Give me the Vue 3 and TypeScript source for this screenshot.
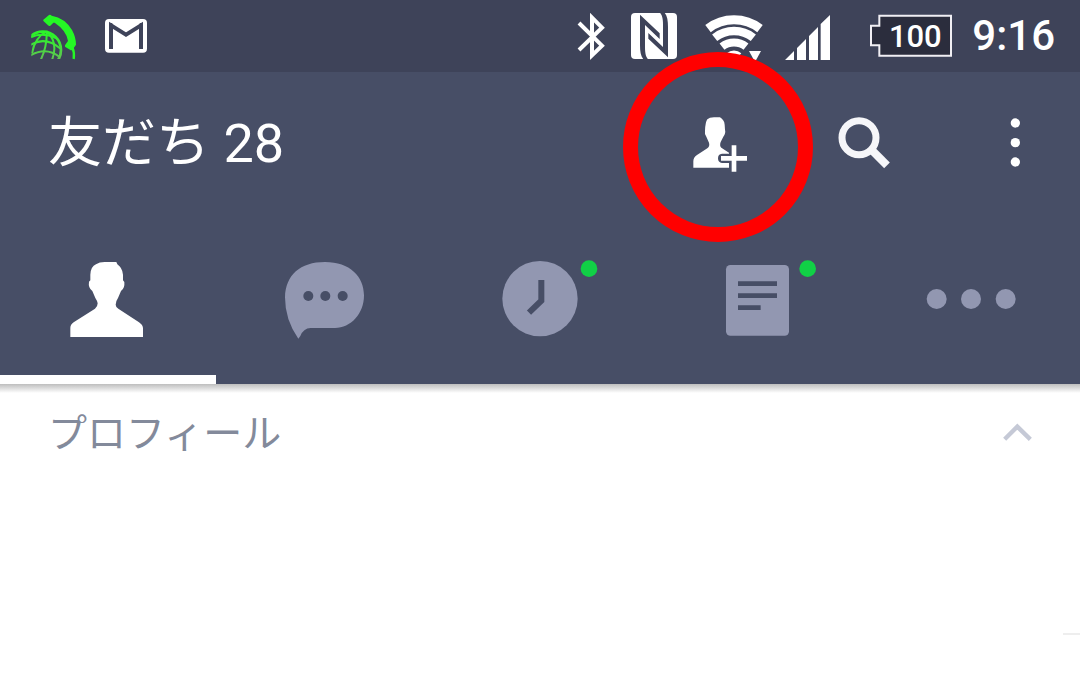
<script setup lang="ts">
import { ref } from 'vue'

type TabId = 'friends' | 'chats' | 'timeline' | 'news' | 'more'

interface Tab {
  id: TabId
  label: string
  viewBox: string
}

const tabs: Tab[] = [
  { id: 'friends', label: '友だち', viewBox: '24 0 360 360' },
  { id: 'chats', label: 'トーク', viewBox: '672 0 360 360' },
  { id: 'timeline', label: 'タイムライン', viewBox: '0 0 360 360' },
  { id: 'news', label: 'ニュース', viewBox: '648 0 360 360' },
  { id: 'more', label: 'その他', viewBox: '36 -60 360 360' },
]

const active = ref<TabId>('friends')
const friendCount = ref(28)
const expanded = ref(true)
</script>

<template>
  <div class="screen">
    <header class="header">
      <div class="status">
        <svg class="st-phone" viewBox="84 0 156 216" aria-hidden="true">
          <defs>
            <linearGradient id="call" gradientUnits="userSpaceOnUse" x1="0" y1="45" x2="0" y2="177">
              <stop offset="0" stop-color="#1fff1f" />
              <stop offset="0.5" stop-color="#30f02c" />
              <stop offset="1" stop-color="#5fc452" />
            </linearGradient>
            <clipPath id="globe"><rect x="94" y="80" width="100" height="97" /></clipPath>
          </defs>
          <path
            fill="#25f825"
            d="M130 59 L147 45 Q151 43 155 47 Q195 54 216 90 Q228 112 228 134 L217 150 Q214 152 210 149 L196 141 Q193 138 196 134 L204 123 Q200 92 164 68 L160 68 L151 77 Q147 79 144 76 L131 64 Q129 62 130 59 Z"
          />
          <path fill="none" stroke="#25f825" stroke-width="7" d="M217 142 Q224 158 221 177" />
          <g clip-path="url(#globe)" fill="none" stroke="url(#call)" stroke-width="6">
            <circle cx="128" cy="150" r="55" stroke-width="8" />
            <path d="M92 112 Q128 96 168 114" />
            <path d="M84 140 Q132 104 182 146" />
            <path d="M88 168 Q138 138 180 172" />
            <path d="M140 94 Q104 112 96 160" />
            <path d="M140 94 Q142 138 122 180" />
            <path d="M140 94 Q176 128 156 180" />
          </g>
        </svg>
        <svg class="st-mail" viewBox="300 0 156 216" aria-hidden="true">
          <rect x="315" y="57" width="126" height="101" rx="12" fill="#fff" />
          <path d="M333 147 V76 L378 104 L423 76 V147" fill="none" stroke="#3e4359" stroke-width="12" />
          <path d="M327 69 H336 L345 84 H327 Z M429 69 H420 L411 84 H429 Z" fill="#3e4359" />
        </svg>
        <div class="status-right">
          <svg class="st-bt" viewBox="36 0 108 216" aria-hidden="true">
            <path d="M57 69 L126 137 L96 166 V53 L126 83 L57 150" fill="none" stroke="#fff" stroke-width="12" />
          </svg>
          <svg class="st-nfc" viewBox="0 -30 156 216" aria-hidden="true">
            <rect x="9" y="9" width="138" height="138" rx="12" fill="#fff" />
            <g fill="#3e4359">
              <path d="M36 14 L95 70 V87 L51 45 V112 C51 132 54 141 60 148 H46 C38 138 36 124 36 105 Z" />
              <path d="M120 142 L61 86 V69 L105 111 V44 C105 24 102 15 96 8 H110 C118 18 120 32 120 51 Z" />
            </g>
          </svg>
          <svg class="st-wifi" viewBox="420 0 204 216" aria-hidden="true">
            <g fill="none" stroke="#fff">
              <path stroke-width="27" d="M444 86 A128 128 0 0 1 600 86" />
              <path stroke-width="25" d="M464 113 A94 94 0 0 1 580 113" />
              <path stroke-width="24" d="M486 140 A59 59 0 0 1 558 140" />
              <path stroke-width="22" d="M507 168 A24 24 0 0 1 537 168" />
            </g>
            <path d="M567 153 H603 L585 186 Z" fill="#fff" />
          </svg>
          <svg class="st-signal" viewBox="672 0 144 216" aria-hidden="true">
            <path
              fill="#fff"
              d="M675 180 L702 153 V180 Z M711 144 L738 117 V180 H711 Z M747 108 L774 81 V180 H747 Z M782 72 L810 45 V180 H782 Z"
            />
          </svg>
          <div class="battery">
            <svg viewBox="84 0 252 216" aria-hidden="true">
              <path
                d="M93 77 H118 V47 H333 V167 H118 V136 H93 Z"
                fill="#2b2d3d"
                stroke="#f1eff4"
                stroke-width="6"
              />
            </svg>
            <span>100</span>
          </div>
          <time class="clock">9:16</time>
        </div>
      </div>

      <div class="bar">
        <h1>友だち {{ friendCount }}</h1>
        <button type="button" class="action highlight" aria-label="友だち追加">
          <svg viewBox="114 96 432 432" aria-hidden="true">
            <path
              fill="#fff"
              d="M250 383 V364 Q250 352 261 345 L292 325 Q300 319 297 308 L289 290 Q283 283 285 272 Q286 246 292 238 Q298 232 312 232 H330 Q343 240 344 254 L345 269 Q348 280 340 290 L332 306 Q328 318 334 323 L357 338 V341 H336 Q324 342 324 355 Q324 368 336 369 H357 V383 Z"
            />
            <path d="M333 355 H411 M372 316 V395" fill="none" stroke="#fff" stroke-width="14" />
          </svg>
        </button>
        <button type="button" class="action" aria-label="検索">
          <svg viewBox="-84 -84 432 432" aria-hidden="true">
            <g fill="none" stroke="#f6f6f9">
              <circle cx="117" cy="113" r="51" stroke-width="21" />
              <path d="M154 149 L201 196" stroke-width="24" />
            </g>
          </svg>
        </button>
        <button type="button" class="action" aria-label="メニュー">
          <svg viewBox="348 -84 432 432" aria-hidden="true">
            <g fill="#fff">
              <circle cx="586" cy="69" r="14" />
              <circle cx="586" cy="128" r="14" />
              <circle cx="586" cy="186" r="14" />
            </g>
          </svg>
        </button>
      </div>

      <nav class="tabs">
        <button
          v-for="tab in tabs"
          :key="tab.id"
          type="button"
          class="tab"
          :class="{ active: tab.id === active }"
          :aria-label="tab.label"
          @click="active = tab.id"
        >
          <svg :viewBox="tab.viewBox" aria-hidden="true">
            <path
              v-if="tab.id === 'friends'"
              fill="currentColor"
              d="M91 291 V264 Q91 254 101 247 L165 206 Q173 200 173 190 Q172 183 166 174 L157 153 Q144 143 147 125 L151 121 V104 Q152 80 168 73 Q178 66 194 66 H229 L232 73 Q247 83 249 104 V121 L253 126 Q255 145 243 153 L234 174 Q227 184 227 194 Q227 201 235 206 L297 247 Q309 255 309 265 V291 Z"
            />
            <template v-else-if="tab.id === 'chats'">
              <path
                fill="currentColor"
                d="M775 296 Q735 240 735 172 C737 105 780 66 855 66 C930 66 972 110 972 166 C972 222 932 264 885 264 H812 Q790 265 781 288 Z"
              />
              <g class="cut">
                <circle cx="805" cy="168" r="15" />
                <circle cx="856" cy="168" r="15" />
                <circle cx="908" cy="168" r="15" />
              </g>
            </template>
            <template v-else-if="tab.id === 'timeline'">
              <circle cx="180" cy="176" r="113" fill="currentColor" />
              <path class="cut-line" d="M184 120 V182 L147 218" stroke-width="18" />
              <circle class="badge" cx="327" cy="86" r="25" />
            </template>
            <template v-else-if="tab.id === 'news'">
              <rect x="738" y="75" width="189" height="212" rx="13" fill="currentColor" />
              <path class="cut-line" d="M774 131 H891 M774 167 H891 M774 203 H842" stroke-width="14" />
              <circle class="badge" cx="983" cy="86" r="25" />
            </template>
            <g v-else fill="currentColor">
              <circle cx="110" cy="117" r="30" />
              <circle cx="213" cy="117" r="30" />
              <circle cx="317" cy="117" r="30" />
            </g>
          </svg>
        </button>
      </nav>
    </header>

    <main>
      <section class="profile">
        <div class="section-head">
          <h2>プロフィール</h2>
          <button type="button" aria-label="折りたたむ" :aria-expanded="expanded" @click="expanded = !expanded">
            <svg viewBox="282 450 144 144" aria-hidden="true">
              <path d="M314 538 L352 500 L391 538" fill="none" stroke="#c5c9d6" stroke-width="13" />
            </svg>
          </button>
        </div>
        <div v-if="expanded" class="profile-body"></div>
        <hr />
      </section>
    </main>
  </div>
</template>

<style>
body {
  margin: 0;
  background: #fff;
}
</style>

<style scoped>
.screen {
  min-height: 100vh;
  background: #fff;
  font-family: Roboto, 'Noto Sans CJK JP', sans-serif;
}

svg {
  display: block;
}

button {
  margin: 0;
  padding: 0;
  border: 0;
  background: none;
  cursor: pointer;
}

h1,
h2 {
  margin: 0;
  font-weight: 400;
}

.header {
  position: relative;
  background: #474e66;
  color: #fff;
}

.header::after {
  content: '';
  position: absolute;
  top: 100%;
  left: 0;
  right: 0;
  height: 9px;
  background: linear-gradient(#bebebe, #fff);
}

.status {
  display: flex;
  align-items: center;
  height: 72px;
  padding: 0 25px 0 28px;
  gap: 20px;
  background: #3e4359;
}

.status svg {
  height: 72px;
  flex: none;
}

.st-phone,
.st-mail,
.st-nfc {
  width: 52px;
}

.st-bt {
  width: 36px;
}

.st-wifi {
  width: 68px;
}

.st-signal {
  width: 48px;
}

.status-right {
  display: flex;
  align-items: center;
  gap: 20px;
  margin-left: auto;
}

.st-signal {
  margin-left: -4px;
}

.battery {
  position: relative;
  display: flex;
  align-items: center;
  justify-content: center;
  width: 84px;
  height: 72px;
  margin-left: 16px;
  font-size: 31px;
  font-weight: 500;
}

.battery svg {
  position: absolute;
  inset: 0;
  width: 84px;
}

.battery span {
  position: relative;
  padding-left: 10px;
}

.clock {
  font-size: 42px;
  font-weight: 500;
  line-height: 52px;
}

.bar {
  display: flex;
  align-items: center;
  height: 144px;
  padding-left: 48px;
}

.bar h1 {
  flex: 1;
  font-size: 54px;
  line-height: 72px;
  white-space: nowrap;
}

.action {
  position: relative;
  width: 144px;
  height: 144px;
}

.highlight::after {
  content: '';
  position: absolute;
  top: -20px;
  left: -25px;
  width: 160px;
  height: 160px;
  border: 15px solid #f00;
  border-radius: 50%;
}

.tabs {
  display: flex;
}

.tab {
  display: flex;
  flex: 1;
  justify-content: center;
  height: 168px;
  padding-top: 24px;
  color: #9297b1;
}

.tab svg {
  width: 120px;
  height: 120px;
}

.tab.active {
  color: #fff;
  box-shadow: inset 0 -9px #fff;
}

.cut {
  fill: #474e66;
}

.cut-line {
  fill: none;
  stroke: #474e66;
}

.badge {
  fill: #11d046;
}

.section-head {
  display: flex;
  align-items: center;
  justify-content: space-between;
  height: 100px;
  padding: 0 38px 0 48px;
}

.section-head h2 {
  color: #838a9b;
  font-size: 39px;
  line-height: 60px;
}

.section-head svg {
  width: 48px;
  height: 48px;
}

.profile-body {
  height: 149px;
}

.profile hr {
  width: 17px;
  height: 2px;
  margin: 0 0 0 auto;
  border: 0;
  background: #eee;
}
</style>
